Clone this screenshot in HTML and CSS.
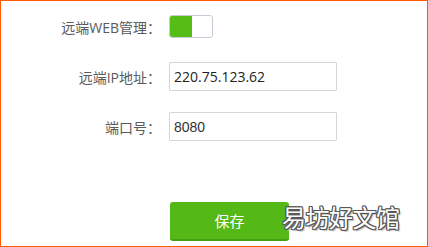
FILE: index.html
```html
<!DOCTYPE html>
<html lang="zh">
<head>
<meta charset="utf-8">
<link rel="stylesheet" href="styles.css">
</head>
<body>
<div class="frame">
  <form class="form">
    <label class="label">远端WEB管理：</label>
    <div class="field">
      <span class="switch"><span class="switch-on"></span></span>
    </div>
    <label class="label">远端IP地址：</label>
    <div class="field"><input class="input ip" type="text" value="220.75.123.62"></div>
    <label class="label">端口号：</label>
    <div class="field"><input class="input port" type="text" value="8080"></div>
    <span></span>
    <div class="actions"><button type="button" class="btn">保存</button></div>
  </form>
  <div class="watermark">易坊好文馆</div>
</div>
</body>
</html>
```
FILE: styles.css
```css
html, body {
  margin: 0;
  padding: 0;
  background: #fff;
}
.frame {
  position: relative;
  width: 428px;
  height: 247px;
  box-sizing: border-box;
  border: 1px solid #ff5a00;
  font-family: "Open Sans", "Noto Sans CJK SC", sans-serif;
}
.form {
  display: grid;
  grid-template-columns: 160px 168px;
  grid-template-rows: 29px 29px 29px 39px;
  row-gap: 21px;
  column-gap: 8px;
  padding-top: 11px;
}
.form .actions { margin-top: 40px; padding-left: 1px; }
.label {
  display: flex;
  align-items: center;
  justify-content: flex-end;
  font-size: 14px;
  color: #5a5a5a;
  font-family: "Open Sans", "Noto Sans CJK SC", sans-serif;
}
.field {
  display: flex;
  align-items: center;
}
.switch {
  display: flex;
  width: 44px;
  height: 23px;
  box-sizing: border-box;
  border: 1px solid #c6cdd6;
  border-radius: 3px;
  background: #fff;
  overflow: hidden;
}
.switch-on {
  width: 22px;
  height: 100%;
  background: #55bd15;
}
.input {
  width: 168px;
  height: 29px;
  box-sizing: border-box;
  border: 1px solid #d5d5d5;
  border-radius: 1px;
  padding: 0 0 0 4px;
  font-size: 14px;
  color: #222;
  font-family: "Open Sans", sans-serif;
  outline: none;
}
.input.port {
  font-family: "Liberation Sans", sans-serif;
  color: #333;
}
.actions {
  display: flex;
}
.btn {
  width: 119px;
  height: 39px;
  border: none;
  border-bottom: 2px solid #43a00f;
  border-radius: 3px;
  background: #54b816;
  color: #fff;
  font-size: 15px;
  font-family: "Noto Sans CJK SC", sans-serif;
  padding: 0;
}
.watermark {
  position: absolute;
  left: 281px;
  top: 199px;
  font-family: "Noto Sans CJK SC", sans-serif;
  font-size: 24px;
  line-height: 34px;
  color: #fff;
  letter-spacing: -0.5px;
  text-shadow:
    1px 0 0 #555, -1px 0 0 #555, 0 1px 0 #555, 0 -1px 0 #555,
    1px 1px 0 #555, -1px -1px 0 #555, 1px -1px 0 #555, -1px 1px 0 #555,
    2px 2px 1px #bbb;
}
```
